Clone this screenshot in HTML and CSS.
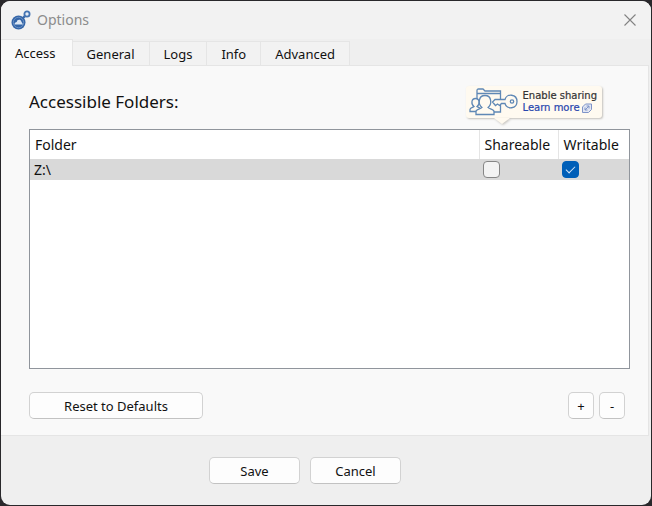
FILE: index.html
```html
<!DOCTYPE html>
<html lang="en">
<head>
<meta charset="utf-8">
<title>Options</title>
<link rel="stylesheet" href="styles.css">
</head>
<body>
<main class="window">
  <header class="titlebar">
    <svg class="app-icon" viewBox="0 0 20 20" aria-hidden="true">
      <path d="M11 9 15 5" stroke="#3a68a8" stroke-width="2.400"/>
      <circle cx="16" cy="4" r="2.600" fill="#e4ebf4" stroke="#4474b2" stroke-width="1.800"/>
      <circle cx="7.500" cy="12.500" r="7" fill="#3566a8"/>
      <circle cx="7.500" cy="12.500" r="5.200" fill="none" stroke="#7d9fcb" stroke-width="0.700"/>
      <path d="M3.500 14.500c0-1.500 1-2.500 2.300-2.500 0-3 4.200-3 4.500-0.500l1.700 3z" fill="#dce7f4"/>
    </svg>
    <h1 class="title">Options</h1>
    <button class="close" type="button" aria-label="Close">
      <svg viewBox="0 0 12 12" width="12" height="12"><path d="M0.500 0.500 11.500 11.500M11.500 0.500 0.500 11.500" stroke="#828282" stroke-width="1.100"/></svg>
    </button>
  </header>
  <nav class="tabs" role="tablist">
    <button class="tab active" role="tab" aria-selected="true" type="button">Access</button>
    <button class="tab" role="tab" type="button">General</button>
    <button class="tab" role="tab" type="button">Logs</button>
    <button class="tab" role="tab" type="button">Info</button>
    <button class="tab" role="tab" type="button">Advanced</button>
  </nav>
  <section class="panel">
    <div class="panel-head">
      <h2 class="heading">Accessible Folders:</h2>
      <div class="callout">
        <svg class="share-icon" viewBox="0 0 50 28" width="50" height="28" fill="#fffaf0" stroke="#5f88b5" stroke-width="1.300" aria-hidden="true">
          <path d="M8 22V2.500Q8 1 9.500 1H14l2 2h15.500V24H22"/>
          <path d="M8 5.500h23.500"/>
          <path d="M1 23.500v-2c0-2 3-2 4-3-3-2-3-8 1.500-8s4.500 6 1.500 8c1 1 4 1 4 3v2z"/>
          <path d="M7 26.500v-3c0-2.500 5-2.500 6-4-4-3-4-12 3-12s7 9 3 12c1 1.500 6 1.500 6 4v3z"/>
          <path d="M36 11.500c1.500-6.500 12-5.500 12 2s-10.500 8.500-12 2H32.500l-2 2-2-1.500-2 1.500-3-3.500 2.500-2.500z"/>
          <circle cx="43" cy="13.500" r="1.700"/>
        </svg>
        <div class="callout-text">
          <span>Enable sharing</span>
          <a href="#sharing">Learn more
            <svg viewBox="0 0 10 10" width="10" height="10" fill="none" stroke="#7f94c8" aria-hidden="true"><path d="M3.500 1h6v5.500l-3 3h-6V4z" fill="#e2e6f2"/><path d="M3 7l4-4M4.500 3H7v2.500M3 4.500V7h2.500"/></svg></a>
        </div>
      </div>
    </div>
    <div class="list">
      <table>
        <thead>
          <tr><th scope="col">Folder</th><th class="shareable" scope="col">Shareable</th><th class="writable" scope="col">Writable</th></tr>
        </thead>
        <tbody>
          <tr><td>Z:\</td><td><input type="checkbox" aria-label="Z:\ shareable"></td><td><input type="checkbox" aria-label="Z:\ writable" checked></td></tr>
        </tbody>
      </table>
    </div>
    <div class="panel-actions">
      <button class="btn reset" type="button">Reset to Defaults</button>
      <button class="btn square" type="button" aria-label="Add folder">+</button>
      <button class="btn square" type="button" aria-label="Remove folder">-</button>
    </div>
  </section>
  <footer class="footer">
    <button class="btn" type="button">Save</button>
    <button class="btn" type="button">Cancel</button>
  </footer>
</main>
</body>
</html>
```
FILE: styles.css
```css
* {
  box-sizing: border-box;
}

body {
  margin: 0;
  padding: 1px;
  background: #29282b;
  color: #111;
  font: 13px/18px "Noto Sans", sans-serif;
}

button {
  font: inherit;
  color: inherit;
}

.window {
  display: flex;
  flex-direction: column;
  min-height: calc(100vh - 2px);
  border-radius: 9px;
  overflow: hidden;
  background: #efefef;
}

.titlebar {
  display: flex;
  align-items: center;
  height: 38px;
  padding: 0 15px 0 10px;
  background: #f2f2f2;
}

.app-icon {
  width: 20px;
  height: 20px;
}

.title {
  flex: 1;
  margin: 0 0 0 6px;
  color: #8c8c8c;
  font-size: 14px;
  font-weight: 400;
}

.close {
  display: flex;
  padding: 0;
  border: 0;
  background: none;
}

.tabs {
  display: flex;
  align-items: flex-end;
  height: 26px;
}

.tab {
  height: 24px;
  padding: 0 14px;
  border: 1px solid #e5e5e5;
  border-left: 0;
  border-bottom: 0;
  background: #f2f2f2;
}

.tab.active {
  height: 27px;
  margin-bottom: -1px;
  background: #f9f9f9;
  position: relative;
  padding-right: 16px;
}

.panel {
  flex: 1;
  display: flex;
  flex-direction: column;
  margin-right: 2px;
  padding: 0 18px 16px 28px;
  border: 1px solid #e5e5e5;
  border-width: 1px 1px 1px 0;
  background: #f9f9f9;
}

.panel-head {
  display: flex;
  justify-content: space-between;
  height: 63px;
  padding: 20px 28px 0 0;
}

.heading {
  margin: 4px 0 0;
  font-size: 17px;
  line-height: 24px;
  font-weight: 400;
}

.callout {
  position: relative;
  display: flex;
  align-items: center;
  gap: 4px;
  height: 32px;
  padding: 0 5px 0 3px;
  border-radius: 3px;
  background: #fffaf0;
  box-shadow: 1px 1px 2px #c4c1bc;
}

.callout::after {
  content: "";
  position: absolute;
  top: 100%;
  left: 28px;
  border: 8px solid transparent;
  border-top: 6px solid #fffaf0;
  border-bottom: 0;
  filter: drop-shadow(1px 1px 1px #c4c1bc);
}

.callout-text {
  display: flex;
  flex-direction: column;
  font: 10px/12px "DejaVu Sans", sans-serif;
  color: #333;
  -webkit-text-stroke: 0.2px;
}

.callout a {
  display: flex;
  align-items: center;
  gap: 2px;
  color: #2947ae;
  text-decoration: none;
}

.list {
  flex: 1;
  border: 1px solid #90959c;
  background: #fff;
}

table {
  width: 100%;
  table-layout: fixed;
  border-collapse: collapse;
}

th {
  height: 29px;
  padding: 0 5px;
  font-size: 14px;
  font-weight: 400;
  text-align: left;
}

th + th {
  border-left: 1px solid #e5e5e5;
}

.shareable {
  width: 79px;
}

.writable {
  width: 71px;
}

td {
  height: 21px;
  padding: 0 4px;
  background: #d9d9d9;
  font-size: 14px;
}

input {
  appearance: none;
  display: block;
  width: 17px;
  height: 17px;
  margin: 0;
  border: 1px solid #868686;
  border-radius: 4px;
  background: #f3f3f3;
}

input:checked {
  border-color: #005fb8;
  background: #005fb8;
  display: grid;
  place-items: center;
}

input:checked::before {
  content: "";
  width: 8px;
  height: 4px;
  border: solid #d5e7f8;
  border-width: 0 0 1px 1px;
  transform: translateY(-1px) rotate(-45deg);
}

.panel-actions {
  display: flex;
  gap: 5px;
  padding: 23px 5px 0 0;
}

.btn {
  width: 91px;
  height: 27px;
  padding: 0;
  border: 1px solid #d2d2d2;
  border-bottom-color: #c2c2c2;
  border-radius: 5px;
  background: #fdfdfd;
}

.reset {
  width: 174px;
  margin-right: auto;
}

.square {
  width: 26px;
}

.footer {
  display: flex;
  justify-content: center;
  gap: 10px;
  padding: 21px 42px 21px 0;
}
```
